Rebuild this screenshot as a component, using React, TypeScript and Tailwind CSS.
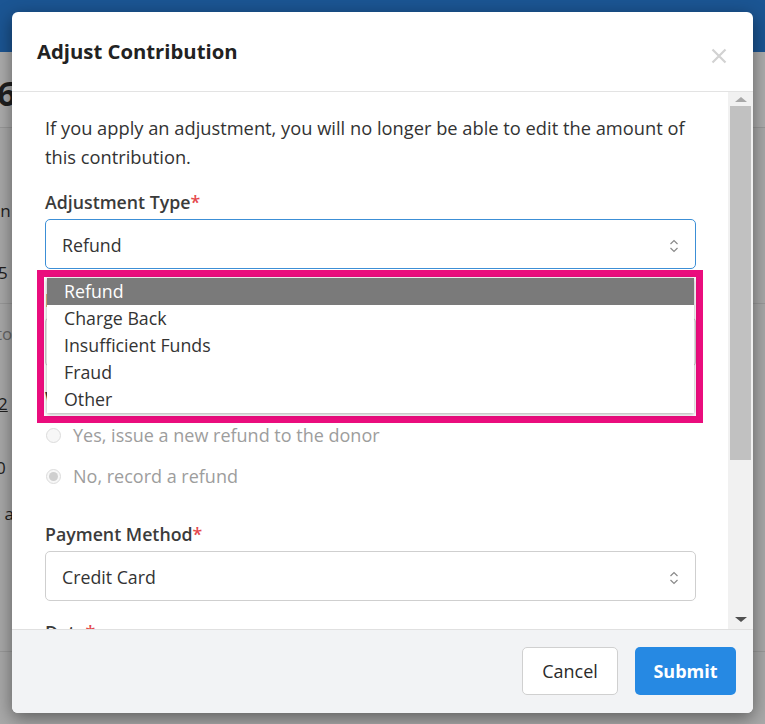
import React from 'react';

const font = { fontFamily: '"Open Sans", "Noto Sans", Arial, sans-serif' };

const Chevrons: React.FC = () => (
  <svg width="10" height="16" viewBox="0 0 10 16" fill="none" stroke="#8a8a8a" strokeWidth="1.2">
    <path d="M1.5 6 L5 2.5 L8.5 6" />
    <path d="M1.5 10 L5 13.5 L8.5 10" />
  </svg>
);

const Label: React.FC<{ text: string }> = ({ text }) => (
  <div className="h-[24px] leading-[24px] text-[17.75px] font-semibold text-[#3b3b3b]">
    {text}
    <span className="text-[#e5484d]">*</span>
  </div>
);

const SelectBox: React.FC<{ value: string; focused?: boolean }> = ({ value, focused }) => (
  <div
    className={
      'mt-[5px] h-[50px] rounded-[5px] border bg-white flex items-center justify-between pl-[16px] pr-[16px] pt-[3px] text-[17.75px] text-[#333] ' +
      (focused ? 'border-[#3c8fd6]' : 'border-[#cfcfcf]')
    }
  >
    <span>{value}</span>
    <Chevrons />
  </div>
);

const Radio: React.FC<{ label: string; checked?: boolean }> = ({ label, checked }) => (
  <div className="h-[28px] flex items-center gap-[12px] text-[18px] text-[#9d9d9d]">
    <span className="ml-[1px] w-[15px] h-[15px] rounded-full border border-[#dcdcdc] bg-[#f7f7f7] flex items-center justify-center">
      {checked && <span className="w-[9px] h-[9px] rounded-full bg-[#cfcfcf]" />}
    </span>
    <span>{label}</span>
  </div>
);

const options = ['Refund', 'Charge Back', 'Insufficient Funds', 'Fraud', 'Other'];

export default function App() {
  return (
    <div className="relative w-[765px] h-[724px] overflow-hidden bg-[#a9a9a9]" style={font}>
      {/* page behind the overlay */}
      <div className="h-[52px] bg-[#1b5593]" />
      <div className="text-[#1f1f1f] text-[17px]">
        <div className="h-[76px] border-b border-[#999] bg-[#adadad] flex items-center pt-[8px]">
          <span className="-ml-[3px] text-[34px] font-bold">6</span>
        </div>
        <div className="h-[176px] border-b border-[#999] pt-[71px]">
          <div className="-ml-[4px] leading-[24px]">in</div>
          <div className="-ml-[2px] mt-[38px] leading-[24px]">5</div>
        </div>
        <div className="h-[348px] border-b border-[#999] pt-[18px]">
          <div className="-ml-[4px] leading-[24px] text-[#666]">to</div>
          <div className="-ml-[2px] mt-[46px] leading-[24px] underline">2</div>
          <div className="-ml-[4px] mt-[40px] leading-[24px]">0</div>
          <div className="-ml-[6px] mt-[22px] leading-[24px]">t a</div>
        </div>
      </div>

      {/* modal */}
      <div className="absolute left-[12px] top-[12px] w-[741px] h-[701px] bg-white rounded-[6px] shadow-[0_5px_18px_rgba(0,0,0,0.45)] flex flex-col overflow-hidden">
        <div className="h-[80px] shrink-0 border-b border-[#e3e3e3] flex items-center justify-between pl-[25px] pr-[25px]">
          <h2 className="text-[20.3px] font-bold text-[#222]">Adjust Contribution</h2>
          <svg width="16" height="16" viewBox="0 0 16 16" stroke="#d2d2d2" strokeWidth="2.2" className="mt-[8px] mr-[1px]">
            <path d="M1.5 1.5 L14.5 14.5 M14.5 1.5 L1.5 14.5" />
          </svg>
        </div>

        <div className="flex-1 flex min-h-0">
          <div className="flex-1 overflow-hidden pl-[33px] pr-[32px] pt-[21px]">
            <p className="text-[18.3px] leading-[29px] text-[#333]">
              If you apply an adjustment, you will no longer be able to edit the amount of this contribution.
            </p>
            <div className="mt-[19px]">
              <Label text="Adjustment Type" />
              <SelectBox value="Refund" focused />
            </div>
            <div className="mt-[19px]">
              <Label text="Refund Reason" />
              <SelectBox value="Select a reason" />
            </div>
            <div className="mt-[19px]">
              <Label text="Would you like to issue a refund?" />
              <div className="mt-[11px] flex flex-col gap-[13px]">
                <Radio label="Yes, issue a new refund to the donor" />
                <Radio label="No, record a refund" checked />
              </div>
            </div>
            <div className="mt-[32px]">
              <Label text="Payment Method" />
              <SelectBox value="Credit Card" />
            </div>
            <div className="mt-[19px]">
              <Label text="Date" />
            </div>
          </div>
          {/* scrollbar */}
          <div className="w-[25px] shrink-0 bg-[#f1f1f1] flex flex-col items-center">
            <div className="h-[14px] flex items-center">
              <span className="w-0 h-0 border-l-[6px] border-r-[6px] border-b-[5px] border-l-transparent border-r-transparent border-b-[#a8a8a8]" />
            </div>
            <div className="w-[21px] h-[354px] bg-[#c1c1c1]" />
            <div className="flex-1" />
            <div className="h-[20px] flex items-center">
              <span className="w-0 h-0 border-l-[6px] border-r-[6px] border-t-[5px] border-l-transparent border-r-transparent border-t-[#505050]" />
            </div>
          </div>
        </div>

        <div className="h-[84px] shrink-0 border-t border-[#e0e0e0] bg-[#f2f3f5] flex items-center justify-end gap-[17px] pr-[17px] pb-[1px]">
          <button className="w-[96px] h-[48px] rounded-[5px] border border-[#d0d0d0] bg-white text-[18px] text-[#2a2a2a]">
            Cancel
          </button>
          <button className="w-[101px] h-[48px] rounded-[5px] bg-[#2689e3] text-[18px] font-bold text-white">
            Submit
          </button>
        </div>
      </div>

      {/* open dropdown, outlined */}
      <div className="absolute left-[37px] top-[270px] w-[666px] h-[153px] border-[7px] border-[#ea0d7d] pl-[3px] pt-[1px] pr-[2px] pb-[3px]">
        <div className="h-full bg-white shadow-[0_1px_4px_rgba(0,0,0,0.35)] text-[17.75px] text-[#333]">
          {options.map((o, i) => (
            <div
              key={o}
              className={'h-[27px] leading-[27px] pl-[17px] ' + (i === 0 ? 'bg-[#7a7a7a] text-white' : '')}
            >
              {o}
            </div>
          ))}
        </div>
      </div>
    </div>
  );
}
